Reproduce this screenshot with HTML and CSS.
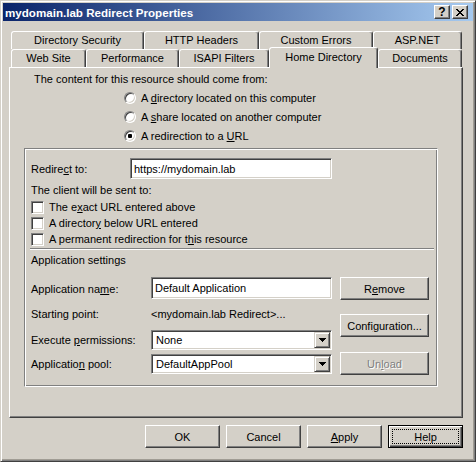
FILE: index.html
```html
<!DOCTYPE html>
<html>
<head>
<meta charset="utf-8">
<title>mydomain.lab Redirect Properties</title>
<link rel="stylesheet" href="styles.css">
</head>
<body>
<div class="window">
  <div class="titlebar">
    <span class="title">mydomain.lab Redirect Properties</span>
    <div class="caption-btns">
      <span class="cbtn qmark">?</span>
      <span class="cbtn"><svg width="8" height="7" viewBox="0 0 8 7" shape-rendering="crispEdges"><path d="M0 0h2v1H0z M6 0h2v1H6z M1 1h2v1H1z M5 1h2v1H5z M2 2h4v1H2z M3 3h2v1H3z M2 4h4v1H2z M1 5h2v1H1z M5 5h2v1H5z M0 6h2v1H0z M6 6h2v1H6z" fill="#000"/></svg></span>
    </div>
  </div>

  <div class="dialog">
    <div class="tabs">
      <div class="tabrow back">
        <div class="tab">Directory Security</div>
        <div class="tab">HTTP Headers</div>
        <div class="tab">Custom Errors</div>
        <div class="tab">ASP.NET</div>
      </div>
      <div class="tabrow front">
        <div class="tab">Web Site</div>
        <div class="tab">Performance</div>
        <div class="tab">ISAPI Filters</div>
        <div class="tab active">Home Directory</div>
        <div class="tab">Documents</div>
      </div>
    </div>

    <div class="panel">
      <p class="intro">The content for this resource should come from:</p>
      <div class="radios">
        <div class="radio-row"><span class="radio"></span><span>A <u>d</u>irectory located on this computer</span></div>
        <div class="radio-row"><span class="radio"></span><span>A <u>s</u>hare located on another computer</span></div>
        <div class="radio-row"><span class="radio checked"></span><span>A redirection to a <u>U</u>RL</span></div>
      </div>

      <div class="group">
        <div class="redirect-row">
          <span>Redire<u>c</u>t to:</span>
          <div class="field">https://mydomain.lab</div>
        </div>
        <p class="client-label">The client will be sent to:</p>
        <div class="checks">
          <div class="check-row"><span class="checkbox"></span><span>The e<u>x</u>act URL entered above</span></div>
          <div class="check-row"><span class="checkbox"></span><span>A director<u>y</u> below URL entered</span></div>
          <div class="check-row"><span class="checkbox"></span><span>A permanent redirection for t<u>h</u>is resource</span></div>
        </div>
        <div class="sep"></div>
        <p class="app-title">Application settings</p>

        <div class="app">
          <div class="app-grid">
            <span class="lbl">Application na<u>m</u>e:</span>
            <div class="field name-field">Default Application</div>
            <span class="lbl">Starting point:</span>
            <span class="lbl">&lt;mydomain.lab Redirect&gt;...</span>
            <span class="lbl">Execute <u>p</u>ermissions:</span>
            <div class="select"><span class="sel-text">None</span><span class="dd"><svg width="7" height="4" viewBox="0 0 7 4" shape-rendering="crispEdges"><path d="M0 0h7v1H0z M1 1h5v1H1z M2 2h3v1H2z M3 3h1v1H3z" fill="#000"/></svg></span></div>
            <span class="lbl">Applicatio<u>n</u> pool:</span>
            <div class="select"><span class="sel-text">DefaultAppPool</span><span class="dd"><svg width="7" height="4" viewBox="0 0 7 4" shape-rendering="crispEdges"><path d="M0 0h7v1H0z M1 1h5v1H1z M2 2h3v1H2z M3 3h1v1H3z" fill="#000"/></svg></span></div>
          </div>
          <div class="app-buttons">
            <button class="btn wide">R<u>e</u>move</button>
            <button class="btn wide config">Confi<u>g</u>uration...</button>
            <button class="btn wide unload" disabled>Un<u>l</u>oad</button>
          </div>
        </div>
      </div>
    </div>

    <div class="buttons">
      <button class="btn">OK</button>
      <button class="btn">Cancel</button>
      <button class="btn"><u>A</u>pply</button>
      <button class="btn default"><span class="focus">Help</span></button>
    </div>
  </div>
</div>
</body>
</html>
```

FILE: styles.css
```css
* { box-sizing: border-box; }

body {
  margin: 0;
  background: #d4d0c8;
  font-family: "Liberation Sans", Arial, sans-serif;
  font-size: 11px;
  color: #000;
}

u { text-decoration: underline; text-underline-offset: 1px; }

.window {
  width: 476px;
  height: 462px;
  background: #d4d0c8;
  border: 1px solid;
  border-color: #d4d0c8 #404040 #404040 #d4d0c8;
  box-shadow: inset 1px 1px #fff, inset -1px -1px #808080, inset -2px -2px #a09c94;
  padding: 2px;
}

.titlebar {
  height: 18px;
  background: linear-gradient(to right, #0a246a, #a6caf0);
  display: flex;
  align-items: center;
  justify-content: space-between;
  padding: 0 5px 0 2px;
}

.title {
  color: #fff;
  font-weight: bold;
  font-size: 11.6px;
}

.caption-btns { display: flex; gap: 2px; }

.cbtn {
  width: 16px;
  height: 14px;
  background: #d4d0c8;
  border: 1px solid;
  border-color: #fff #404040 #404040 #fff;
  box-shadow: inset -1px -1px #808080;
  display: flex;
  align-items: center;
  justify-content: center;
}

.qmark { font-weight: bold; font-size: 12px; line-height: 1; }

.dialog { padding: 10px 0 0 6px; }

.tabs { margin-left: 2px; width: 451px; }

.tabrow { display: grid; height: 18px; }
.tabrow.back { grid-template-columns: 133px 115px 114px 89px; }
.tabrow.front { grid-template-columns: 75px 93px 90px 109px 84px; }

.tab {
  height: 18px;
  background: #d4d0c8;
  border: 1px solid;
  border-bottom: none;
  border-color: #fff #404040 transparent #fff;
  box-shadow: inset -1px 0 #808080;
  border-radius: 3px 3px 0 0;
  text-align: center;
  line-height: 17px;
  white-space: nowrap;
}

.tab.active {
  position: relative;
  z-index: 1;
  margin-top: -2px;
  height: 21px;
  line-height: 18px;
}

.panel {
  width: 454px;
  height: 351px;
  border: 1px solid;
  border-color: #fff #404040 #404040 #fff;
  box-shadow: inset -1px -1px #808080;
  padding-top: 5px;
}

.intro { margin: 0 0 0 24px; line-height: 13px; }

.radios { margin: 2px 0 0 114px; }

.radio-row {
  display: flex;
  align-items: center;
  gap: 5px;
  height: 19px;
}

.radio {
  position: relative;
  width: 12px;
  height: 12px;
  border-radius: 50%;
  background: #fff;
  border: 1px solid;
  border-color: #808080 #fff #fff #808080;
  box-shadow: inset 1px 1px #404040, inset -1px -1px #d4d0c8;
}

.radio.checked::after {
  content: "";
  position: absolute;
  left: 3px;
  top: 3px;
  width: 4px;
  height: 4px;
  border-radius: 1px;
  background: #000;
}

.group {
  margin: 3px 0 0 14px;
  width: 414px;
  height: 239px;
  border: 1px solid;
  border-color: #808080 #fff #fff #808080;
  box-shadow: inset 1px 1px #fff, inset -1px -1px #808080;
  padding: 9px 0 0 6px;
}

.redirect-row {
  display: grid;
  grid-template-columns: 99px 202px;
  align-items: center;
  height: 21px;
}

.field {
  height: 21px;
  background: #fff;
  border: 1px solid;
  border-color: #808080 #fff #fff #808080;
  box-shadow: inset 1px 1px #404040, inset -1px -1px #d4d0c8;
  padding: 0 3px;
  display: flex;
  align-items: center;
  white-space: nowrap;
  overflow: hidden;
}

.client-label { margin: 5px 0 0; line-height: 13px; }

.checks { margin-top: 2px; }

.check-row {
  display: flex;
  align-items: center;
  gap: 5px;
  height: 16px;
}

.checkbox {
  width: 13px;
  height: 13px;
  background: #fff;
  border: 1px solid;
  border-color: #808080 #fff #fff #808080;
  box-shadow: inset 1px 1px #404040, inset -1px -1px #d4d0c8;
}

.sep {
  margin: 1px 0 0 -1px;
  width: 404px;
  height: 2px;
  border-top: 1px solid #808080;
  border-bottom: 1px solid #fff;
}

.app-title { margin: 4px 0 0; line-height: 13px; }

.app { display: flex; margin-top: 10px; }

.app-grid {
  display: grid;
  grid-template-columns: 120px 181px;
  grid-template-rows: 23px 27px 25px 24px;
  align-items: center;
}

.lbl { white-space: nowrap; }

.name-field { height: 22px; align-self: start; }

.select {
  height: 20px;
  display: flex;
  background: #fff;
  border: 1px solid;
  border-color: #808080 #fff #fff #808080;
  box-shadow: inset 1px 1px #404040, inset -1px -1px #d4d0c8;
  padding: 1px;
}

.sel-text {
  flex: 1;
  padding: 0 0 0 3px;
  display: flex;
  align-items: center;
}

.dd {
  width: 16px;
  background: #d4d0c8;
  border: 1px solid;
  border-color: #d4d0c8 #404040 #404040 #d4d0c8;
  box-shadow: inset 1px 1px #fff, inset -1px -1px #808080;
  display: flex;
  align-items: center;
  justify-content: center;
}

.app-buttons {
  display: flex;
  flex-direction: column;
  margin-left: 8px;
}

.btn {
  width: 75px;
  height: 23px;
  padding: 0;
  background: #d4d0c8;
  border: 1px solid;
  border-color: #fff #404040 #404040 #fff;
  box-shadow: inset -1px -1px #808080;
  font: inherit;
  color: #000;
  display: flex;
  align-items: center;
  justify-content: center;
}

.btn.wide { width: 89px; }
.btn.config { margin-top: 14px; }
.btn.unload { margin-top: 15px; color: #808080; text-shadow: 1px 1px #fff; }

.buttons {
  width: 454px;
  margin-top: 7px;
  display: flex;
  justify-content: flex-end;
  gap: 6px;
}

.btn.default {
  border: 1px solid #000;
  box-shadow: inset 1px 1px #fff, inset -1px -1px #404040, inset -2px -2px #808080;
  padding: 3px;
}

.focus {
  width: 100%;
  height: 100%;
  border: 1px dotted #000;
  display: flex;
  align-items: center;
  justify-content: center;
}
```
